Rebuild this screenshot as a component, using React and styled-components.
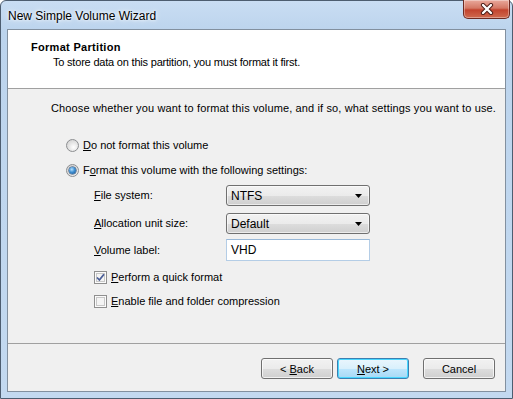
import React from 'react';
import styled, {createGlobalStyle} from 'styled-components';

const GlobalStyle = createGlobalStyle`
  html, body {
    margin: 0;
    padding: 0;
    background: #ffffff;
  }
  body {
    font-family: "Liberation Sans", Arial, sans-serif;
    font-size: 11px;
    color: #000;
  }
`

const Key = styled.span`
  text-decoration: underline;
  text-underline-offset: 1px;
`

const Radio = ({checked}) => (
  <RadioCircle>
    {checked && <RadioDot />}
  </RadioCircle>
)

const Check = ({checked}) => (
  <CheckBox>
    {checked && (
      <svg width="9" height="9" viewBox="0 0 9 9">
        <path d="M1 4.5 L3.4 7 L8 1.2" fill="none" stroke="#4a5e98" strokeWidth="1.8" />
      </svg>
    )}
  </CheckBox>
)

const Combo = ({value}) => (
  <ComboBox>
    <span>{value}</span>
    <svg width="8" height="4" viewBox="0 0 8 4">
      <path d="M0 0 H7 L3.5 4 Z" fill="#000" />
    </svg>
  </ComboBox>
)

const App = () => {
  return (
    <Window>
      <GlobalStyle />
      <TitleBar>
        <Title>New Simple Volume Wizard</Title>
        <CloseButton>
          <svg width="14" height="12" viewBox="0 0 14 12">
            <path d="M3 2 L11 10 M11 2 L3 10" stroke="#4a1a14" strokeWidth="4.2" strokeLinecap="round" />
            <path d="M3 2 L11 10 M11 2 L3 10" stroke="#ffffff" strokeWidth="2.4" strokeLinecap="round" />
          </svg>
        </CloseButton>
      </TitleBar>
      <Client>
        <Header>
          <HeaderTitle>Format Partition</HeaderTitle>
          <HeaderSub>To store data on this partition, you must format it first.</HeaderSub>
        </Header>
        <Body>
          <Intro>Choose whether you want to format this volume, and if so, what settings you want to use.</Intro>
          <OptionRow $top={22}>
            <Radio />
            <Label><Key>D</Key>o not format this volume</Label>
          </OptionRow>
          <OptionRow $top={9}>
            <Radio checked />
            <Label>F<Key>o</Key>rmat this volume with the following settings:</Label>
          </OptionRow>
          <FieldRow $top={7}>
            <FieldLabel><Key>F</Key>ile system:</FieldLabel>
            <Combo value="NTFS" />
          </FieldRow>
          <FieldRow $top={7}>
            <FieldLabel><Key>A</Key>llocation unit size:</FieldLabel>
            <Combo value="Default" />
          </FieldRow>
          <FieldRow $top={5}>
            <FieldLabel><Key>V</Key>olume label:</FieldLabel>
            <TextBox>VHD</TextBox>
          </FieldRow>
          <CheckRow $top={8}>
            <Check checked />
            <Label><Key>P</Key>erform a quick format</Label>
          </CheckRow>
          <CheckRow $top={8}>
            <Check />
            <Label><Key>E</Key>nable file and folder compression</Label>
          </CheckRow>
        </Body>
        <Footer>
          <Button>{'< '}<Key>B</Key>ack</Button>
          <Button $default><Key>N</Key>ext &gt;</Button>
          <Button $gap={14}>Cancel</Button>
        </Footer>
      </Client>
    </Window>
  )
}

const Window = styled.div`
  width: 513px;
  height: 399px;
  box-sizing: border-box;
  border: 1px solid #4d5d70;
  border-radius: 6px 6px 0 0;
  background: linear-gradient(to bottom, #c9ddf3 0px, #bcd4ed 30px, #c3d9f0 100%);
  padding: 0 6px 6px 6px;
  display: flex;
  flex-direction: column;
`

const TitleBar = styled.div`
  height: 28px;
  display: flex;
  align-items: flex-start;
  padding-left: 1px;
  margin-right: -4px;
`

const Title = styled.div`
  font-size: 12px;
  line-height: 14px;
  margin-top: 8px;
  color: #000;
  text-shadow: 0 0 6px #ffffff, 0 0 3px #ffffff;
`

const CloseButton = styled.div`
  margin-left: auto;
  margin-top: -1px;
  width: 47px;
  height: 19px;
  box-sizing: border-box;
  border: 1px solid #6d2a22;
  border-top: none;
  border-radius: 0 0 5px 5px;
  background: linear-gradient(to bottom, #e9a99c 0%, #d47865 45%, #c2432e 55%, #cf6a4f 100%);
  box-shadow: inset 0 0 0 1px rgba(255, 255, 255, 0.35);
  display: flex;
  align-items: center;
  justify-content: center;
`

const Client = styled.div`
  flex: 1;
  border: 1px solid #82909f;
  background: #f0f0f0;
  display: flex;
  flex-direction: column;
`

const Header = styled.div`
  height: 59px;
  box-sizing: border-box;
  background: #ffffff;
  border-bottom: 1px solid #a0a0a0;
  padding: 11px 0 0 23px;
  flex-shrink: 0;
`

const HeaderTitle = styled.div`
  font-weight: bold;
  line-height: 13px;
  letter-spacing: 0.3px;
`

const HeaderSub = styled.div`
  line-height: 13px;
  margin-top: 2px;
  padding-left: 22px;
  letter-spacing: -0.2px;
`

const Body = styled.div`
  height: 255px;
  box-sizing: border-box;
  border-bottom: 1px solid #a0a0a0;
  padding: 13px 0 0 43px;
  flex-shrink: 0;
`

const Intro = styled.div`
  line-height: 13px;
  letter-spacing: 0.13px;
  white-space: nowrap;
`

const OptionRow = styled.div`
  display: flex;
  align-items: center;
  gap: 4px;
  height: 16px;
  margin-top: ${p => p.$top}px;
  margin-left: 15px;
`

const CheckRow = styled(OptionRow)`
  margin-left: 43px;
`

const Label = styled.span`
  line-height: 13px;
`

const RadioCircle = styled.span`
  width: 13px;
  height: 13px;
  box-sizing: border-box;
  border-radius: 50%;
  border: 1px solid #8c8e91;
  background: radial-gradient(circle at 60% 65%, #ffffff 0%, #e6e6e6 45%, #c9c9c9 100%);
  display: flex;
  align-items: center;
  justify-content: center;
`

const RadioDot = styled.span`
  width: 7px;
  height: 7px;
  border-radius: 50%;
  background: radial-gradient(circle at 40% 35%, #b7e2ff 0%, #3f8fd2 45%, #134b86 100%);
  box-shadow: 0 0 0 0.5px #1b3b63;
`

const CheckBox = styled.span`
  width: 13px;
  height: 13px;
  box-sizing: border-box;
  border: 1px solid #8f8f8f;
  background: #f4f4f4;
  box-shadow: inset 0 0 0 1px #fbfbfb, inset 0 0 0 2px #c8c8c8;
  display: flex;
  align-items: center;
  justify-content: center;
`

const FieldRow = styled.div`
  display: flex;
  align-items: center;
  margin-top: ${p => p.$top}px;
  margin-left: 43px;
`

const FieldLabel = styled.span`
  width: 132px;
  line-height: 13px;
`

const ComboBox = styled.div`
  width: 144px;
  height: 21px;
  box-sizing: border-box;
  border: 1px solid #707070;
  border-radius: 3px;
  background: linear-gradient(to bottom, #f2f2f2 0%, #ebebeb 50%, #dddddd 51%, #cfcfcf 100%);
  box-shadow: inset 0 0 0 1px rgba(255, 255, 255, 0.6);
  display: flex;
  align-items: center;
  justify-content: space-between;
  padding: 0 6px 0 4px;
  font-size: 12px;
`

const TextBox = styled.div`
  width: 144px;
  height: 22px;
  box-sizing: border-box;
  border: 1px solid #b4cde6;
  border-top-color: #98b8d8;
  background: #ffffff;
  padding: 3px 0 0 4px;
  font-size: 12px;
  line-height: 14px;
`

const Footer = styled.div`
  flex: 1;
  display: flex;
  justify-content: flex-end;
  align-items: flex-start;
  gap: 4px;
  padding: 14px 10px 0 0;
`

const Button = styled.div`
  width: 72px;
  height: 21px;
  box-sizing: border-box;
  margin-left: ${p => (p.$gap ? p.$gap - 4 : 0)}px;
  border: 1px solid ${p => (p.$default ? '#3c7fb1' : '#707070')};
  border-radius: 3px;
  background: ${p => (p.$default
    ? 'linear-gradient(to bottom, #eaf6fd 0%, #d9f0fc 50%, #bee6fd 51%, #a7d9f5 100%)'
    : 'linear-gradient(to bottom, #f2f2f2 0%, #ebebeb 50%, #dddddd 51%, #cfcfcf 100%)')};
  box-shadow: inset 0 0 0 1px ${p => (p.$default ? '#48d7ff' : 'rgba(255, 255, 255, 0.7)')};
  display: flex;
  align-items: center;
  justify-content: center;
  font-size: 11px;
  white-space: pre;
`

export default App
